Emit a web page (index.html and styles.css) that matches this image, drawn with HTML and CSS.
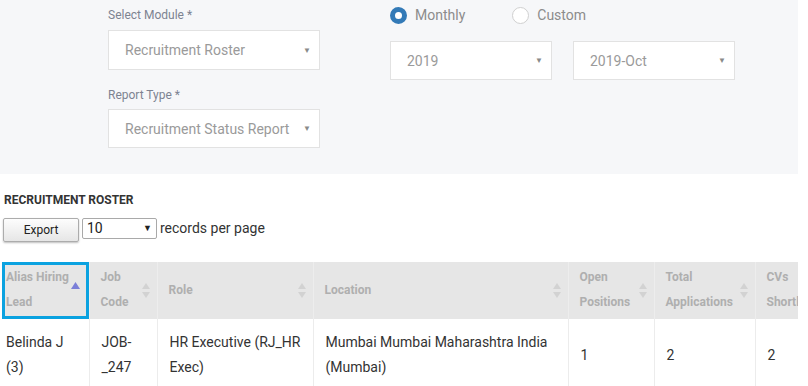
FILE: index.html
```html
<!DOCTYPE html>
<html lang="en">
<head>
    <meta charset="UTF-8">
    <meta name="viewport" content="width=device-width, initial-scale=1.0">
    <title>Recruitment Roster Report</title>
    <link rel="stylesheet" href="styles.css">
</head>
<body>
    <div class="page">
        <div class="filters">
            <div class="filter-col">
                <label class="field-label">Select Module *</label>
                <div class="select-box">
                    <span>Recruitment Roster</span>
                    <span class="caret">&#9660;</span>
                </div>
                <label class="field-label second">Report Type *</label>
                <div class="select-box short">
                    <span>Recruitment Status Report</span>
                    <span class="caret">&#9660;</span>
                </div>
            </div>

            <div class="period-col">
                <div class="radio-row">
                    <label class="radio">
                        <span class="radio-dot checked"></span>
                        Monthly
                    </label>
                    <label class="radio">
                        <span class="radio-dot"></span>
                        Custom
                    </label>
                </div>
                <div class="select-row">
                    <div class="select-box small">
                        <span>2019</span>
                        <span class="caret">&#9660;</span>
                    </div>
                    <div class="select-box small">
                        <span>2019-Oct</span>
                        <span class="caret">&#9660;</span>
                    </div>
                </div>
            </div>
        </div>

        <div class="report">
            <h3 class="report-title">RECRUITMENT ROSTER</h3>
            <div class="toolbar">
                <button class="export-btn">Export</button>
                <div class="page-size">
                    <span>10</span>
                    <span class="page-caret">&#9660;</span>
                </div>
                <span class="page-size-label">records per page</span>
            </div>

            <div class="table-wrap">
                <table class="roster">
                    <colgroup>
                        <col style="width: 87px">
                        <col style="width: 68px">
                        <col style="width: 156px">
                        <col style="width: 255px">
                        <col style="width: 86px">
                        <col style="width: 101px">
                        <col style="width: 110px">
                    </colgroup>
                    <thead>
                        <tr>
                            <th class="sorted">
                                Alias Hiring Lead
                                <svg class="sort-asc" width="9" height="8" viewBox="0 0 9 8"><polygon points="4.5 0 9 7 0 7" fill="currentColor"/></svg>
                            </th>
                            <th>
                                Job Code
                                <svg class="sort" width="8" height="16" viewBox="0 0 8 16"><polygon points="4 0 8 6 0 6" fill="currentColor"/><polygon points="0 9 8 9 4 15" fill="currentColor"/></svg>
                            </th>
                            <th>
                                Role
                                <svg class="sort" width="8" height="16" viewBox="0 0 8 16"><polygon points="4 0 8 6 0 6" fill="currentColor"/><polygon points="0 9 8 9 4 15" fill="currentColor"/></svg>
                            </th>
                            <th>
                                Location
                                <svg class="sort" width="8" height="16" viewBox="0 0 8 16"><polygon points="4 0 8 6 0 6" fill="currentColor"/><polygon points="0 9 8 9 4 15" fill="currentColor"/></svg>
                            </th>
                            <th>
                                Open Positions
                                <svg class="sort" width="8" height="16" viewBox="0 0 8 16"><polygon points="4 0 8 6 0 6" fill="currentColor"/><polygon points="0 9 8 9 4 15" fill="currentColor"/></svg>
                            </th>
                            <th>
                                Total Applications
                                <svg class="sort" width="8" height="16" viewBox="0 0 8 16"><polygon points="4 0 8 6 0 6" fill="currentColor"/><polygon points="0 9 8 9 4 15" fill="currentColor"/></svg>
                            </th>
                            <th>
                                CVs Shortlisted
                                <svg class="sort" width="8" height="16" viewBox="0 0 8 16"><polygon points="4 0 8 6 0 6" fill="currentColor"/><polygon points="0 9 8 9 4 15" fill="currentColor"/></svg>
                            </th>
                        </tr>
                    </thead>
                    <tbody>
                        <tr>
                            <td class="first">Belinda J (3)</td>
                            <td>JOB-_247</td>
                            <td>HR Executive (RJ_HR Exec)</td>
                            <td>Mumbai Mumbai Maharashtra India (Mumbai)</td>
                            <td>1</td>
                            <td>2</td>
                            <td>2</td>
                        </tr>
                    </tbody>
                </table>
            </div>
        </div>
    </div>
</body>
</html>
```

FILE: styles.css
```css
* {
    margin: 0;
    padding: 0;
    box-sizing: border-box;
}

body {
    font-family: Roboto, "Liberation Sans", Arial, sans-serif;
    background-color: #fff;
    color: #333;
}

.page {
    width: 798px;
    overflow: hidden;
}

/* filter panel */
.filters {
    display: flex;
    gap: 70px;
    height: 174px;
    padding: 5px 0 0 108px;
    background-color: #f6f7f9;
}

.filter-col {
    width: 212px;
    display: flex;
    flex-direction: column;
}

.field-label {
    font-size: 12px;
    line-height: 20px;
    color: #7d8391;
    margin-bottom: 5px;
}

.field-label.second {
    margin-top: 15px;
    margin-bottom: 4px;
}

.select-box {
    display: flex;
    align-items: center;
    justify-content: space-between;
    height: 40px;
    padding: 0 8px 0 16px;
    background-color: #fff;
    border: 1px solid #e2e2e2;
    font-size: 14px;
    color: #9a9a9a;
}

.select-box.short {
    height: 39px;
}

.caret {
    font-size: 8px;
    color: #8a8a8a;
}

.period-col {
    display: flex;
    flex-direction: column;
}

.radio-row {
    display: flex;
    gap: 47px;
    height: 20px;
    align-items: center;
    margin-bottom: 16px;
}

.radio {
    display: flex;
    align-items: center;
    gap: 8px;
    font-size: 14px;
    color: #8c8c8c;
}

.radio-dot {
    width: 17px;
    height: 17px;
    border-radius: 50%;
    border: 1px solid #d0d0d0;
    background-color: #fff;
}

.radio-dot.checked {
    border: 5px solid #337ab7;
}

.select-row {
    display: flex;
    gap: 21px;
}

.select-box.small {
    width: 162px;
    height: 39px;
}

/* report */
.report {
    padding-top: 19px;
}

.report-title {
    font-size: 12px;
    font-weight: bold;
    line-height: 14px;
    color: #333;
    padding-left: 4px;
}

.toolbar {
    display: flex;
    align-items: flex-start;
    margin-top: 11px;
    padding-left: 3px;
    height: 44px;
}

.export-btn {
    width: 76px;
    height: 24px;
    font-family: inherit;
    font-size: 12px;
    color: #222;
    background: linear-gradient(#fdfdfd, #e6e6e6);
    border: 1px solid #acacac;
    border-radius: 2px;
    box-shadow: 0 1px 2px rgba(0, 0, 0, 0.25);
}

.page-size {
    display: flex;
    align-items: center;
    justify-content: space-between;
    width: 75px;
    height: 21px;
    margin-left: 3px;
    padding: 0 4px 2px 4px;
    border: 1px solid #a9a9a9;
    border-radius: 2px;
    font-size: 14px;
    color: #222;
}

.page-caret {
    font-size: 9px;
    color: #222;
}

.page-size-label {
    font-size: 14px;
    line-height: 20px;
    margin-left: 3px;
    color: #333;
}

.table-wrap {
    padding-left: 2px;
}

.roster {
    table-layout: fixed;
    border-collapse: collapse;
    width: 863px;
}

.roster th {
    position: relative;
    background-color: #e6e6e6;
    color: #afafaf;
    font-size: 12px;
    font-weight: bold;
    line-height: 25px;
    text-align: left;
    vertical-align: middle;
    padding: 3px 18px 4px 11px;
    border-right: 1px solid #ededed;
}

.roster th.sorted {
    padding-left: 4px;
    padding-right: 16px;
    outline: 3px solid #0ba2e0;
    outline-offset: -3px;
}

.sort {
    position: absolute;
    right: 7px;
    top: 50%;
    margin-top: -8px;
    color: #d2d2d2;
}

.sort-asc {
    position: absolute;
    right: 9px;
    top: 50%;
    margin-top: -9px;
    color: #7b7fd8;
}

.roster td {
    font-size: 14px;
    line-height: 25px;
    color: #333;
    padding: 11px 12px 9px 12px;
    vertical-align: middle;
    border-right: 1px solid #ececec;
}

.roster td.first {
    padding-left: 4px;
}
```
